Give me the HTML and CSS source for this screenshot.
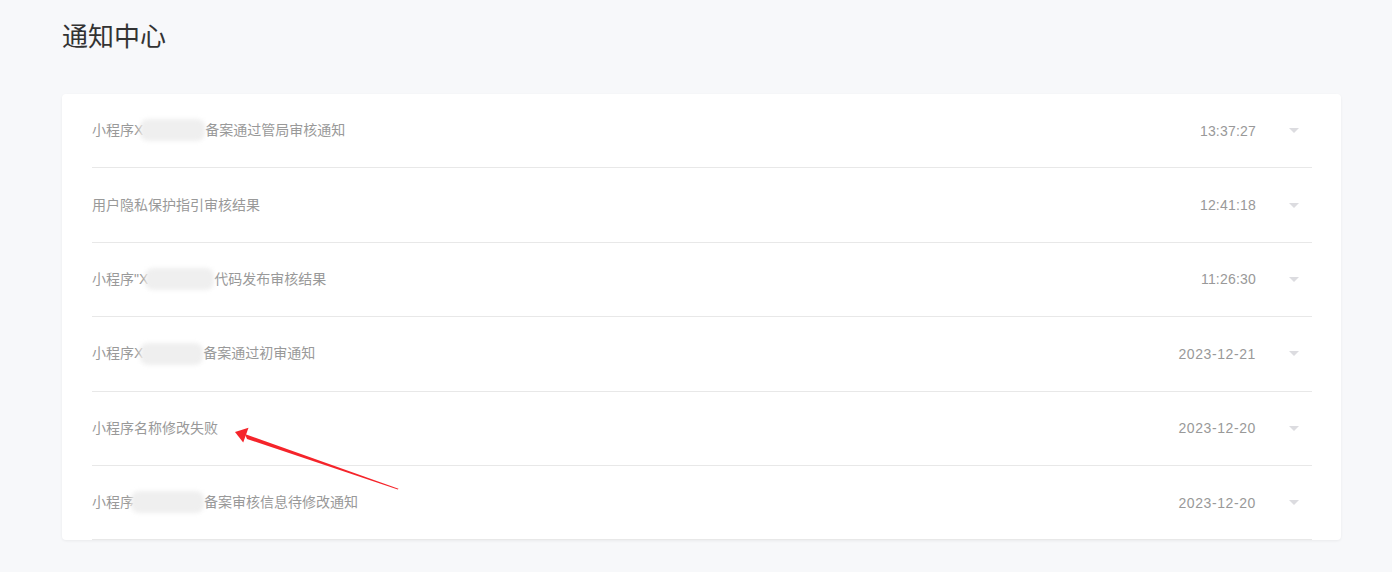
FILE: index.html
```html
<!DOCTYPE html>
<html lang="zh">
<head>
<meta charset="utf-8">
<title>通知中心</title>
<link rel="stylesheet" href="styles.css">
</head>
<body>
<div class="page">
  <h1 class="title">通知中心</h1>
  <div class="card">
    <div class="row">
      <div class="msg">小程序X<span class="blob w62"></span>备案通过管局审核通知</div>
      <div class="time">13:37:27</div>
      <span class="caret"></span>
    </div>
    <div class="row">
      <div class="msg">用户隐私保护指引审核结果</div>
      <div class="time">12:41:18</div>
      <span class="caret"></span>
    </div>
    <div class="row">
      <div class="msg">小程序"X<span class="blob w68"></span>代码发布审核结果</div>
      <div class="time">11:26:30</div>
      <span class="caret"></span>
    </div>
    <div class="row">
      <div class="msg">小程序X<span class="blob w60"></span>备案通过初审通知</div>
      <div class="time date">2023-12-21</div>
      <span class="caret"></span>
    </div>
    <div class="row">
      <div class="msg">小程序名称修改失败</div>
      <div class="time date">2023-12-20</div>
      <span class="caret"></span>
    </div>
    <div class="row">
      <div class="msg">小程序<span class="blob w70"></span>备案审核信息待修改通知</div>
      <div class="time date">2023-12-20</div>
      <span class="caret"></span>
    </div>
  </div>
</div>
<svg class="annot" width="1392" height="572" viewBox="0 0 1392 572" xmlns="http://www.w3.org/2000/svg">
  <polygon points="244.8,434 398.5,488.8 397.8,489.5 247,439" fill="#f5242a"/>
  <polygon points="235,432 248.5,427.8 243.2,442.5" fill="#f5242a"/>
</svg>
</body>
</html>
```
FILE: styles.css
```css
html, body {
  margin: 0;
  padding: 0;
}
body {
  background: #f7f8fa;
  font-family: "Liberation Sans", "Noto Sans CJK SC", sans-serif;
  width: 1392px;
  height: 572px;
  overflow: hidden;
  position: relative;
}
.page {
  padding: 19px 0 0 62px;
}
.title {
  margin: 0 0 39px 0;
  font-size: 26px;
  line-height: 36px;
  font-weight: normal;
  color: #333;
}
.card {
  width: 1279px;
  box-sizing: border-box;
  background: #fff;
  border-radius: 4px;
  padding: 0 29px 0 30px;
  box-shadow: 0 1px 3px rgba(0, 0, 0, 0.06);
}
.row {
  height: 74.4px;
  box-sizing: border-box;
  border-bottom: 1px solid #e8e8e8;
  display: flex;
  align-items: center;
}
.msg {
  flex: 1;
  font-size: 14px;
  color: #999;
  line-height: 20px;
  white-space: nowrap;
}
.time {
  font-size: 14px;
  color: #999;
  margin-right: 33px;
  letter-spacing: 0.2px;
}
.date {
  letter-spacing: 0.6px;
}
.caret {
  width: 0;
  height: 0;
  border-left: 5px solid transparent;
  border-right: 5px solid transparent;
  border-top: 5px solid #dcdce0;
  margin-right: 13px;
}
.blob {
  display: inline-block;
  height: 22px;
  vertical-align: middle;
  background: #efefef;
  border-radius: 8px;
  filter: blur(2px);
  margin-top: -2px;
  margin-left: -3px;
}
.w60 { width: 63px; }
.w62 { width: 65px; }
.w68 { width: 69px; }
.w70 { width: 73px; }
.annot {
  position: absolute;
  left: 0;
  top: 0;
  pointer-events: none;
}
```
